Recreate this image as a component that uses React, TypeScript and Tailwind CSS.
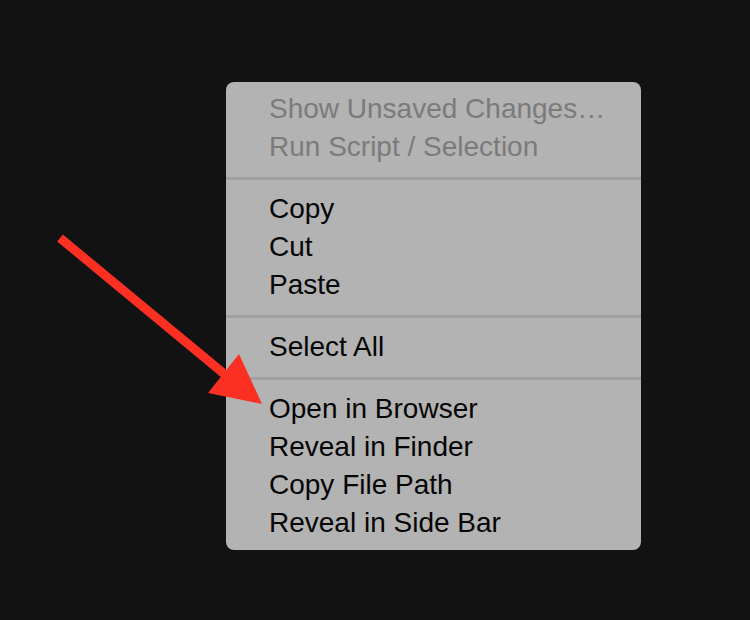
import React from "react";

type Item = { label: string; disabled?: boolean } | "sep";

const ITEMS: Item[] = [
  { label: "Show Unsaved Changes…", disabled: true },
  { label: "Run Script / Selection", disabled: true },
  "sep",
  { label: "Copy" },
  { label: "Cut" },
  { label: "Paste" },
  "sep",
  { label: "Select All" },
  "sep",
  { label: "Open in Browser" },
  { label: "Reveal in Finder" },
  { label: "Copy File Path" },
  { label: "Reveal in Side Bar" },
];

export default function App() {
  return (
    <main
      className="relative h-[620px] w-[750px] overflow-hidden bg-[#121212] pl-[226px] pt-[82px]"
      style={{ fontFamily: '"Liberation Sans", Arial, sans-serif' }}
    >
      {/* context menu */}
      <div className="w-[415px] rounded-[8px] bg-[#b3b3b3] py-[8px]">
        {ITEMS.map((it, i) =>
          it === "sep" ? (
            <div key={i} className="flex h-[24px] items-center">
              <div className="h-[3px] w-full bg-[#a1a1a1]" />
            </div>
          ) : (
            <div
              key={i}
              className={`flex h-[38px] items-center pl-[43px] text-[28px] leading-none ${
                it.disabled ? "text-[#7b7b7b]" : "text-[#050505]"
              }`}
            >
              {it.label}
            </div>
          ),
        )}
      </div>

      {/* red arrow */}
      <svg
        className="pointer-events-none absolute left-0 top-0"
        width="750"
        height="620"
        viewBox="0 0 750 620"
      >
        <line x1="60" y1="238" x2="228" y2="377" stroke="#fc3022" strokeWidth="9" />
        <polygon points="262,404 239,354 208,393" fill="#fc3022" />
      </svg>
    </main>
  );
}
